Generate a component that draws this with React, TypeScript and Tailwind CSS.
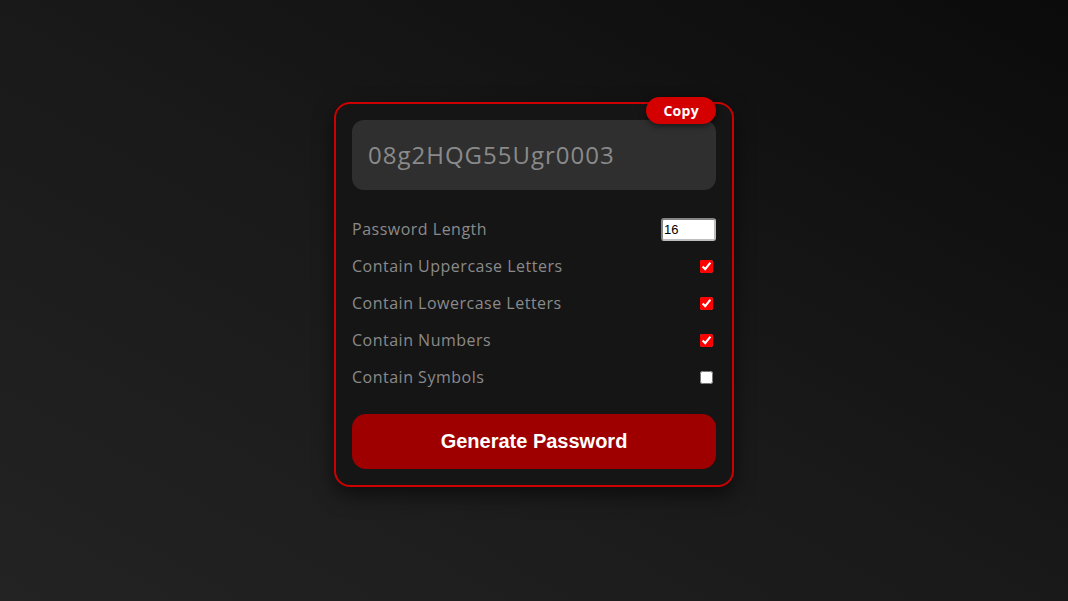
import React, { useState } from "react";

const options = [
  { key: "upper", label: "Contain Uppercase Letters", on: true },
  { key: "lower", label: "Contain Lowercase Letters", on: true },
  { key: "numbers", label: "Contain Numbers", on: true },
  { key: "symbols", label: "Contain Symbols", on: false },
];

export default function App() {
  const [length, setLength] = useState(16);
  const [checks, setChecks] = useState<Record<string, boolean>>(
    Object.fromEntries(options.map((o) => [o.key, o.on]))
  );
  const [password] = useState("08g2HQG55Ugr0003");

  return (
    <main className="w-full h-[601px] pb-[13px] flex items-center justify-center bg-gradient-to-tr from-[#232323] via-[#191919] to-[#0b0b0b] font-['Open_Sans',sans-serif]">
      <div className="relative w-[400px] border-2 border-[#cc0000] rounded-[16px] bg-[#151515] p-4 shadow-[0_8px_20px_rgba(0,0,0,0.55)]">
        <button className="absolute -top-[7px] right-4 h-[27px] px-[17px] rounded-full bg-[#d40000] text-white text-[14px] font-bold tracking-[0.3px] shadow-[0_2px_6px_rgba(0,0,0,0.5)]">
          Copy
        </button>

        <div className="h-[70px] rounded-[12px] bg-[#2f2f2f] flex items-center px-4">
          <span className="text-[24px] text-[#8a8a8a] tracking-[1px]">{password}</span>
        </div>

        <div className="mt-[21px] flex flex-col text-[16px] text-[#8a8a8a] tracking-[0.5px]">
          <div className="h-[37px] flex items-center justify-between">
            <label>Password Length</label>
            <input
              type="number"
              value={length}
              onChange={(e) => setLength(Number(e.target.value))}
              className="w-[55px] h-[23px] bg-white text-black text-[13px] tracking-normal font-['Liberation_Sans',sans-serif] border-2 border-t-[#858585] border-l-[#858585] border-r-[#bdbdbd] border-b-[#bdbdbd] rounded-[3px] px-[1px]"
            />
          </div>
          {options.map((o) => (
            <div key={o.key} className="h-[37px] flex items-center justify-between">
              <label>{o.label}</label>
              <input
                type="checkbox"
                checked={checks[o.key]}
                onChange={() => setChecks({ ...checks, [o.key]: !checks[o.key] })}
                className="w-[13px] h-[13px] mr-[3px] accent-[#ff0000]"
              />
            </div>
          ))}
        </div>

        <button className="mt-[18px] w-full h-[55px] rounded-[14px] bg-[#9e0000] text-white text-[20px] font-bold font-['Liberation_Sans',sans-serif]">
          Generate Password
        </button>
      </div>
    </main>
  );
}
